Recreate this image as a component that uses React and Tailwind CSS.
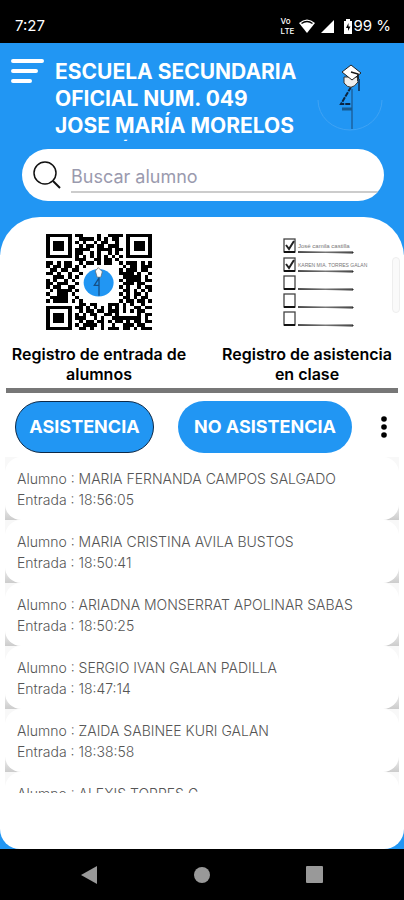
import { useState } from "react"

const BLUE = "#2196f3"

// 29 x 29 code modules, one string for each row
const QR_ROWS = [
  "1111111.11....1..1111.1111111",
  "1.....1..1111.1.1.11..1.....1",
  "1.111.1.1.1..1.11..1..1.111.1",
  "1.111.1..1.11.11.111..1.111.1",
  "1.111.1.1111..1111.11.1.111.1",
  "1.....1.11..1.1..1.1..1.....1",
  "1111111.1.1.1.1.1.1.1.1111111",
  "........111..11.11.1.........",
  "11.1.11..1.11.1.11..1.111.1.1",
  "1.11.11.1.1..........1.11.111",
  ".11.11.11...........1.111.11.",
  "11.1..1..1..........1111.1..1",
  "..111.1.1............11111.1.",
  "1.1..1.1............1.1111.11",
  "11.111..1............111.11..",
  "1.11..11............1.1..1.11",
  ".1.1111.1............11.1.1.1",
  "1..111.1............1.1.11.1.",
  ".11111..1............11.1.11.",
  "1.1111.1.1..........1.11.11.1",
  ".........11.11...111.1.1..1..",
  "1111111.11.1.1.1.1.1.1..11.11",
  "1.....1..1.11.11.111.1.1.11..",
  "1.111.1.1.1.11..11.1.....1.11",
  "1.111.1.111..1.1..11111111.1.",
  "1.111.1..1.11.11.1.11.1.11.11",
  "1.....1.1.1111.1..1..111.11..",
  "1111111..11.1..1.111.11.1.111",
]

const students = [
  { name: "MARIA FERNANDA CAMPOS SALGADO", time: "18:56:05" },
  { name: "MARIA CRISTINA AVILA BUSTOS", time: "18:50:41" },
  { name: "ARIADNA MONSERRAT APOLINAR SABAS", time: "18:50:25" },
  { name: "SERGIO IVAN GALAN PADILLA", time: "18:47:14" },
  { name: "ZAIDA SABINEE KURI GALAN", time: "18:38:58" },
  { name: "ALEXIS TORRES G", time: "18:35:12" },
]

const StatusBar = () => (
  <div className="h-[43px] shrink-0 bg-black text-white flex items-end justify-between pl-[15px] pr-[13px] pb-[7px]">
    <span className="text-[15px] leading-5">7:27</span>
    <div className="flex items-center">
      <span className="text-[8px] leading-[10px] font-medium">
        Vo
        <br />
        LTE
      </span>
      <svg width="18" height="16" viewBox="0 0 18 16" className="ml-1">
        <path d="M1 5 Q9 -2 17 5 L9 15 Z" fill="white" />
        <path d="M3.5 5.5 Q9 1.5 14.5 5.5" fill="none" stroke="black" strokeWidth="1.3" />
      </svg>
      <svg width="15" height="15" viewBox="0 0 15 15" className="ml-1">
        <path d="M14 1 V14 H1 Z" fill="white" />
      </svg>
      <svg width="10" height="15" viewBox="0 0 10 15" className="ml-2">
        <path d="M3 0 H7 V2 H9 V15 H1 V2 H3 Z" fill="white" />
        <path d="M5.5 4 L3 9 H5 V12 L7.5 7.5 H5.5 Z" fill="black" />
      </svg>
      <span className="text-[15px] leading-5">99 %</span>
    </div>
  </div>
)

const SchoolLogo = () => (
  <svg width="66" height="70" viewBox="0 0 66 70" className="shrink-0" role="img" aria-label="Logo">
    <path d="M1 37 A32 30 0 0 0 65 37" fill="none" stroke="#3fa3f3" strokeWidth="1" />
    <path d="M35 26 V66" stroke="#1c62a0" strokeWidth="1.5" />
    <path d="M34 24 L24 41 L34 41" fill="none" stroke="#0b2540" strokeWidth="2" strokeDasharray="5 1" />
    <path d="M25 46 H35" stroke="#155a91" strokeWidth="3" />
    <path d="M27 14 V20 Q34 29 41 19 V14 Z" fill="#eee" stroke="#333" strokeWidth="1" />
    <path d="M25 9 L34 2 L44 10 L35 17 Z" fill="white" stroke="#222" strokeWidth="1" />
    <path d="M34 9 L41 11 V18" fill="none" stroke="#161616" strokeWidth="1.5" />
    <path d="M42 16 V28" stroke="#124575" strokeWidth="2" />
  </svg>
)

const QrCode = () => (
  <svg width="106" height="96" viewBox="0 0 29 28" preserveAspectRatio="none" role="img" aria-label="QR">
    <path
      shapeRendering="crispEdges"
      d={QR_ROWS.map((row, y) =>
        [...row].map((cell, x) => (cell === "1" ? `M${x} ${y}h1v1h-1z` : "")).join("")
      ).join("")}
    />
    <ellipse cx="14.4" cy="14.2" rx="4.1" ry="4" fill={BLUE} />
    <path d="M13.5 10.8 L14.3 9.8 L15.4 11 L15 12.6 H14 Z" fill="white" stroke="#666" strokeWidth=".2" />
    <path d="M14.5 12.6 V18 M14.4 13 L13.2 15 H14.4" fill="none" stroke="#174f85" strokeWidth=".35" />
  </svg>
)

const Checklist = () => (
  <svg width="90" height="92" viewBox="0 0 90 92" role="img" aria-label="Lista">
    <defs>
      <linearGradient id="ink">
        <stop offset="0" stopColor="#111" />
        <stop offset=".5" stopColor="#777" />
        <stop offset="1" stopColor="#111" />
      </linearGradient>
    </defs>
    {[1, 20, 38, 56, 74].map((y) => (
      <g key={y} fill="none" stroke="#444">
        <rect x="1" y={y} width="11" height="13" strokeWidth="1.3" />
        <path d={`M1 ${y + 13} H12`} stroke="#111" strokeWidth="2" />
        <path d={`M15 ${y + 13} L70 ${y + 14} V${y + 13} Z`} stroke="url(#ink)" strokeWidth="1" />
      </g>
    ))}
    <path d="M3 7 L6 11 L11 3 M3 26 L6 30 L11 22" fill="none" stroke="#222" strokeWidth="2" />
    <g className="font-['Liberation_Sans_Narrow','Liberation_Sans',sans-serif] font-normal" fill="#777">
      <text x="15" y="10" fontSize="6">José camila castilla</text>
      <text x="15" y="29" fontSize="5">KAREN MIA. TORRES GALAN</text>
    </g>
  </svg>
)

const StudentCard = ({ name, time }) => (
  <li className="bg-[linear-gradient(#f8f8f8_0%,#f8f8f8_70%,#cccccc_100%)]">
    <div className="bg-white rounded-2xl h-[63px] px-3 pt-[11px] text-sm leading-[21px] font-light text-[#555] whitespace-nowrap">
      <p>Alumno : {name}</p>
      <p>Entrada : {time}</p>
    </div>
  </li>
)

const App = () => {
  const [search, setSearch] = useState("")
  const [tab, setTab] = useState("asistencia")

  return (
    <div className="h-screen flex flex-col overflow-hidden bg-[#2196f3] font-[Inter,sans-serif]">
      <StatusBar />

      <header className="h-[98px] shrink-0 flex items-start pl-[11px] pr-[21px] overflow-hidden">
        <button type="button" aria-label="Menú" className="mt-4 w-11 shrink-0">
          <svg width="34" height="26" viewBox="0 0 34 26" stroke="white" strokeWidth="4" strokeLinecap="round">
            <path d="M2 2 H31 M2 12 H25 M2 22 H19" />
          </svg>
        </button>
        <h1 className="mt-[15px] flex-1 text-[21px] leading-[27px] font-bold text-white whitespace-nowrap">
          ESCUELA SECUNDARIA
          <br />
          OFICIAL NUM. 049
          <br />
          JOSE MARÍA MORELOS
          <br />Y PAVÓN
        </h1>
        <div className="mt-5">
          <SchoolLogo />
        </div>
      </header>

      <label className="mr-5 mt-2 ml-[22px] h-[52px] shrink-0 flex items-center bg-white rounded-full pl-[11px] overflow-hidden">
        <svg width="28" height="28" viewBox="0 0 28 28" fill="none" stroke="#111" strokeWidth="1.5">
          <circle cx="12" cy="12" r="11" />
          <path d="M20 20 L27 27" strokeWidth="2" />
        </svg>
        <input
          type="text"
          aria-label="Buscar alumno"
          placeholder="Buscar alumno"
          value={search}
          onChange={(e) => setSearch(e.target.value)}
          className="ml-[10px] mt-1 h-8 flex-1 min-w-0 border-b-2 border-[#ccc] outline-none text-lg placeholder:text-[#9a9aae]"
        />
      </label>

      <main className="relative mt-4 flex-1 min-h-0 flex flex-col bg-white rounded-t-[40px] rounded-b-[20px]">
        <div className="absolute right-1 top-10 w-2 h-14 rounded-full border border-[#eee] bg-[#fafafa]" />
        <div className="grid grid-cols-2 pt-[17px] text-base leading-5 font-semibold text-black text-center">
          <button type="button" className="flex flex-col items-center pr-1">
            <QrCode />
            <span className="mt-[14px] whitespace-nowrap">
              Registro de entrada de
              <br />
              alumnos
            </span>
          </button>
          <button type="button" className="flex flex-col items-center pl-2">
            <span className="h-24 pt-1 pl-[42px]">
              <Checklist />
            </span>
            <span className="mt-[14px] whitespace-nowrap">
              Registro de asistencia
              <br />
              en clase
            </span>
          </button>
        </div>

        <hr className="mx-[6px] mt-1 border-0 h-[5px] bg-[#777]" />

        <div className="mt-2 pl-[15px] pr-3 flex items-center text-lg font-bold text-white">
          <button
            type="button"
            onClick={() => setTab("asistencia")}
            className={`h-[52px] w-[139px] rounded-full bg-[#2196f3] ${tab === "asistencia" ? "border border-[#0d2947]" : ""}`}
          >
            ASISTENCIA
          </button>
          <button
            type="button"
            onClick={() => setTab("no-asistencia")}
            className={`ml-6 h-[52px] w-[174px] rounded-full bg-[#2196f3] ${tab === "no-asistencia" ? "border border-[#0d2947]" : ""}`}
          >
            NO ASISTENCIA
          </button>
          <button type="button" aria-label="Más opciones" className="ml-auto w-4 flex justify-center">
            <svg width="6" height="24" viewBox="0 0 6 24" fill="black">
              <circle cx="3" cy="4" r="2.8" />
              <circle cx="3" cy="12" r="2.8" />
              <circle cx="3" cy="20" r="2.8" />
            </svg>
          </button>
        </div>

        <ul className="mx-[5px] mt-1 mb-14 flex-1 min-h-0 overflow-hidden">
          {students.map((student) => (
            <StudentCard key={student.name} {...student} />
          ))}
        </ul>
      </main>

      <nav className="h-[51px] shrink-0 bg-black px-20 flex items-center justify-between">
        <button type="button" aria-label="Atrás">
          <svg width="18" height="20" viewBox="0 0 18 20">
            <path d="M1 10 L17 1 V19 Z" fill="#999" />
          </svg>
        </button>
        <button type="button" aria-label="Inicio">
          <svg width="18" height="18" viewBox="0 0 18 18">
            <circle cx="9" cy="9" r="8" fill="#999" />
          </svg>
        </button>
        <button type="button" aria-label="Recientes">
          <svg width="18" height="18" viewBox="0 0 18 18">
            <rect width="17" height="17" rx="1" fill="#999" />
          </svg>
        </button>
      </nav>
    </div>
  )
}

export default App
